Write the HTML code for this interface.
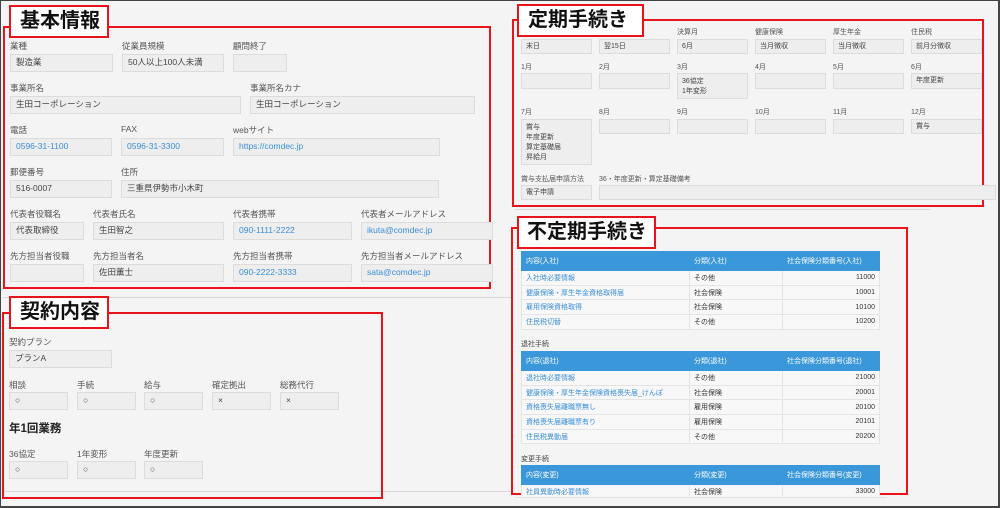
<!DOCTYPE html>
<html><head><meta charset="utf-8">
<style>
*{margin:0;padding:0;box-sizing:border-box}
body{width:1000px;height:508px;background:#f4f4f4;position:relative;overflow:hidden;font-family:"Liberation Sans","Noto Sans CJK JP",sans-serif;color:#333}
.frame{position:absolute;left:0;top:0;width:1000px;height:508px;border:1px solid #444;border-width:1px 2px 2px 1px;z-index:5;pointer-events:none}
.a{position:absolute}
.l{position:absolute;font-size:8.5px;color:#555;white-space:nowrap}
.i{position:absolute;background:#eeeeee;border:1px solid #dcdcdc;font-size:8.5px;color:#444;padding:0 5px;line-height:15px;white-space:nowrap}
.s .i{font-size:7px;line-height:13px;padding:0 4px}
.s .l{font-size:7px}
.b{color:#3a8ed8}
.red{position:absolute;border:2px solid #e8141c}
.tt{position:absolute;background:#fff;border:2px solid #e8141c;font-weight:bold;font-size:20px;color:#111;padding-left:9px;line-height:28px;z-index:3;white-space:nowrap;overflow:hidden}
.hr{position:absolute;height:1px;background:#d8d8d8}
table{position:absolute;border-collapse:collapse;font-size:7px;width:359px}
th{background:#3a97d9;color:#fff;font-weight:normal;text-align:left;height:19px;padding:0 4px;border:1px solid #3a97d9}
td{background:#f8f8f8;border:1px solid #e4e4e4;height:14.7px;padding:0 4px}
td.r{text-align:right}
td a{color:#3a8ed8}
.sec{position:absolute;font-size:7px;color:#444}
</style></head><body>
<div class="frame"></div>
<div class="hr" style="left:3px;top:297px;width:510px"></div>
<div class="hr" style="left:3px;top:491px;width:510px"></div>
<div class="hr" style="left:515px;top:209px;width:415px"></div>

<!-- 基本情報 -->
<div class="red" style="left:3px;top:26px;width:488px;height:263px"></div>
<div class="tt" style="left:9px;top:5px;width:100px;height:33px">基本情報</div>
<div class="l" style="left:10px;top:40px">業種</div><div class="i" style="left:10px;top:54px;width:103px;height:18px">製造業</div>
<div class="l" style="left:122px;top:40px">従業員規模</div><div class="i" style="left:122px;top:54px;width:102px;height:18px">50人以上100人未満</div>
<div class="l" style="left:233px;top:40px">顧問終了</div><div class="i" style="left:233px;top:54px;width:54px;height:18px"></div>
<div class="l" style="left:10px;top:82px">事業所名</div><div class="i" style="left:10px;top:96px;width:231px;height:18px">生田コーポレーション</div>
<div class="l" style="left:250px;top:82px">事業所名カナ</div><div class="i" style="left:250px;top:96px;width:225px;height:18px">生田コーポレーション</div>
<div class="l" style="left:10px;top:124px">電話</div><div class="i b" style="left:10px;top:138px;width:102px;height:18px">0596-31-1100</div>
<div class="l" style="left:121px;top:124px">FAX</div><div class="i b" style="left:121px;top:138px;width:103px;height:18px">0596-31-3300</div>
<div class="l" style="left:233px;top:124px">webサイト</div><div class="i b" style="left:233px;top:138px;width:207px;height:18px">https://comdec.jp</div>
<div class="l" style="left:10px;top:166px">郵便番号</div><div class="i" style="left:10px;top:180px;width:102px;height:18px">516-0007</div>
<div class="l" style="left:121px;top:166px">住所</div><div class="i" style="left:121px;top:180px;width:318px;height:18px">三重県伊勢市小木町</div>
<div class="l" style="left:10px;top:208px">代表者役職名</div><div class="i" style="left:10px;top:222px;width:74px;height:18px">代表取締役</div>
<div class="l" style="left:93px;top:208px">代表者氏名</div><div class="i" style="left:93px;top:222px;width:131px;height:18px">生田智之</div>
<div class="l" style="left:233px;top:208px">代表者携帯</div><div class="i b" style="left:233px;top:222px;width:119px;height:18px">090-1111-2222</div>
<div class="l" style="left:361px;top:208px">代表者メールアドレス</div><div class="i b" style="left:361px;top:222px;width:132px;height:18px">ikuta@comdec.jp</div>
<div class="l" style="left:10px;top:250px">先方担当者役職</div><div class="i" style="left:10px;top:264px;width:74px;height:18px"></div>
<div class="l" style="left:93px;top:250px">先方担当者名</div><div class="i" style="left:93px;top:264px;width:131px;height:18px">佐田薫士</div>
<div class="l" style="left:233px;top:250px">先方担当者携帯</div><div class="i b" style="left:233px;top:264px;width:119px;height:18px">090-2222-3333</div>
<div class="l" style="left:361px;top:250px">先方担当者メールアドレス</div><div class="i b" style="left:361px;top:264px;width:132px;height:18px">sata@comdec.jp</div>

<!-- 契約内容 -->
<div class="red" style="left:2px;top:312px;width:381px;height:187px"></div>
<div class="tt" style="left:9px;top:296px;width:100px;height:33px">契約内容</div>
<div class="l" style="left:9px;top:336px">契約プラン</div><div class="i" style="left:9px;top:350px;width:103px;height:18px">プランA</div>
<div class="l" style="left:9px;top:379px">相談</div><div class="i" style="left:9px;top:392px;width:59px;height:18px">○</div>
<div class="l" style="left:77px;top:379px">手続</div><div class="i" style="left:77px;top:392px;width:59px;height:18px">○</div>
<div class="l" style="left:144px;top:379px">給与</div><div class="i" style="left:144px;top:392px;width:59px;height:18px">○</div>
<div class="l" style="left:212px;top:379px">確定拠出</div><div class="i" style="left:212px;top:392px;width:59px;height:18px">×</div>
<div class="l" style="left:280px;top:379px">総務代行</div><div class="i" style="left:280px;top:392px;width:59px;height:18px">×</div>
<div class="a" style="left:9px;top:420px;font-size:11.5px;font-weight:bold;color:#222">年1回業務</div>
<div class="l" style="left:9px;top:448px">36協定</div><div class="i" style="left:9px;top:461px;width:59px;height:18px">○</div>
<div class="l" style="left:77px;top:448px">1年変形</div><div class="i" style="left:77px;top:461px;width:59px;height:18px">○</div>
<div class="l" style="left:144px;top:448px">年度更新</div><div class="i" style="left:144px;top:461px;width:59px;height:18px">○</div>

<!-- 定期手続き -->
<div class="s">
<div class="red" style="left:512px;top:19px;width:472px;height:188px"></div>
<div class="tt" style="left:517px;top:4px;width:127px;height:33px">定期手続き</div>
<div class="l" style="left:677px;top:27px">決算月</div>
<div class="l" style="left:755px;top:27px">健康保険</div>
<div class="l" style="left:833px;top:27px">厚生年金</div>
<div class="l" style="left:911px;top:27px">住民税</div>
<div class="i" style="left:521px;top:39px;width:71px;height:15px">末日</div>
<div class="i" style="left:599px;top:39px;width:71px;height:15px">翌15日</div>
<div class="i" style="left:677px;top:39px;width:71px;height:15px">6月</div>
<div class="i" style="left:755px;top:39px;width:71px;height:15px">当月徴収</div>
<div class="i" style="left:833px;top:39px;width:71px;height:15px">当月徴収</div>
<div class="i" style="left:911px;top:39px;width:71px;height:15px">前月分徴収</div>
<div class="l" style="left:521px;top:62px">1月</div><div class="i" style="left:521px;top:73px;width:71px;height:16px"></div>
<div class="l" style="left:599px;top:62px">2月</div><div class="i" style="left:599px;top:73px;width:71px;height:16px"></div>
<div class="l" style="left:677px;top:62px">3月</div><div class="i" style="left:677px;top:73px;width:71px;height:26px;line-height:10px;padding-top:3px">36協定<br>1年変形</div>
<div class="l" style="left:755px;top:62px">4月</div><div class="i" style="left:755px;top:73px;width:71px;height:16px"></div>
<div class="l" style="left:833px;top:62px">5月</div><div class="i" style="left:833px;top:73px;width:71px;height:16px"></div>
<div class="l" style="left:911px;top:62px">6月</div><div class="i" style="left:911px;top:73px;width:71px;height:16px">年度更新</div>
<div class="l" style="left:521px;top:107px">7月</div><div class="i" style="left:521px;top:119px;width:71px;height:46px;line-height:10px;padding-top:3px">賞与<br>年度更新<br>算定基礎届<br>昇給月</div>
<div class="l" style="left:599px;top:107px">8月</div><div class="i" style="left:599px;top:119px;width:71px;height:15px"></div>
<div class="l" style="left:677px;top:107px">9月</div><div class="i" style="left:677px;top:119px;width:71px;height:15px"></div>
<div class="l" style="left:755px;top:107px">10月</div><div class="i" style="left:755px;top:119px;width:71px;height:15px"></div>
<div class="l" style="left:833px;top:107px">11月</div><div class="i" style="left:833px;top:119px;width:71px;height:15px"></div>
<div class="l" style="left:911px;top:107px">12月</div><div class="i" style="left:911px;top:119px;width:71px;height:15px">賞与</div>
<div class="l" style="left:521px;top:174px">賞与支払届申請方法</div><div class="i" style="left:521px;top:185px;width:71px;height:15px">電子申請</div>
<div class="l" style="left:599px;top:174px">36・年度更新・算定基礎備考</div><div class="i" style="left:599px;top:185px;width:397px;height:15px"></div>
</div>

<!-- 不定期手続き -->
<div class="red" style="left:511px;top:227px;width:397px;height:268px"></div>
<div class="tt" style="left:517px;top:216px;width:139px;height:33px;padding-left:8px">不定期手続き</div>
<table style="left:521px;top:251px">
<tr><th style="width:168px">内容(入社)</th><th style="width:93px">分類(入社)</th><th>社会保険分類番号(入社)</th></tr>
<tr><td><a>入社時必要情報</a></td><td>その他</td><td class="r">11000</td></tr>
<tr><td><a>健康保険・厚生年金資格取得届</a></td><td>社会保険</td><td class="r">10001</td></tr>
<tr><td><a>雇用保険資格取得</a></td><td>社会保険</td><td class="r">10100</td></tr>
<tr><td><a>住民税切替</a></td><td>その他</td><td class="r">10200</td></tr>
</table>
<div class="sec" style="left:521px;top:339px">退社手続</div>
<table style="left:521px;top:351px">
<tr><th style="width:168px">内容(退社)</th><th style="width:93px">分類(退社)</th><th>社会保険分類番号(退社)</th></tr>
<tr><td><a>退社時必要情報</a></td><td>その他</td><td class="r">21000</td></tr>
<tr><td><a>健康保険・厚生年金保険資格喪失届_けんぽ</a></td><td>社会保険</td><td class="r">20001</td></tr>
<tr><td><a>資格喪失届離職票無し</a></td><td>雇用保険</td><td class="r">20100</td></tr>
<tr><td><a>資格喪失届離職票有り</a></td><td>雇用保険</td><td class="r">20101</td></tr>
<tr><td><a>住民税異動届</a></td><td>その他</td><td class="r">20200</td></tr>
</table>
<div class="sec" style="left:521px;top:454px">変更手続</div>
<table style="left:521px;top:465px">
<tr><th style="width:168px">内容(変更)</th><th style="width:93px">分類(変更)</th><th>社会保険分類番号(変更)</th></tr>
<tr><td><a>社員異動時必要情報</a></td><td>社会保険</td><td class="r">33000</td></tr>
</table>
<div class="a" style="left:509px;top:496px;width:400px;height:12px;background:#f4f4f4;z-index:2"></div>
<div class="hr" style="left:515px;top:497px;width:372px;z-index:2;background:#e0e0e0"></div>
</body></html>
